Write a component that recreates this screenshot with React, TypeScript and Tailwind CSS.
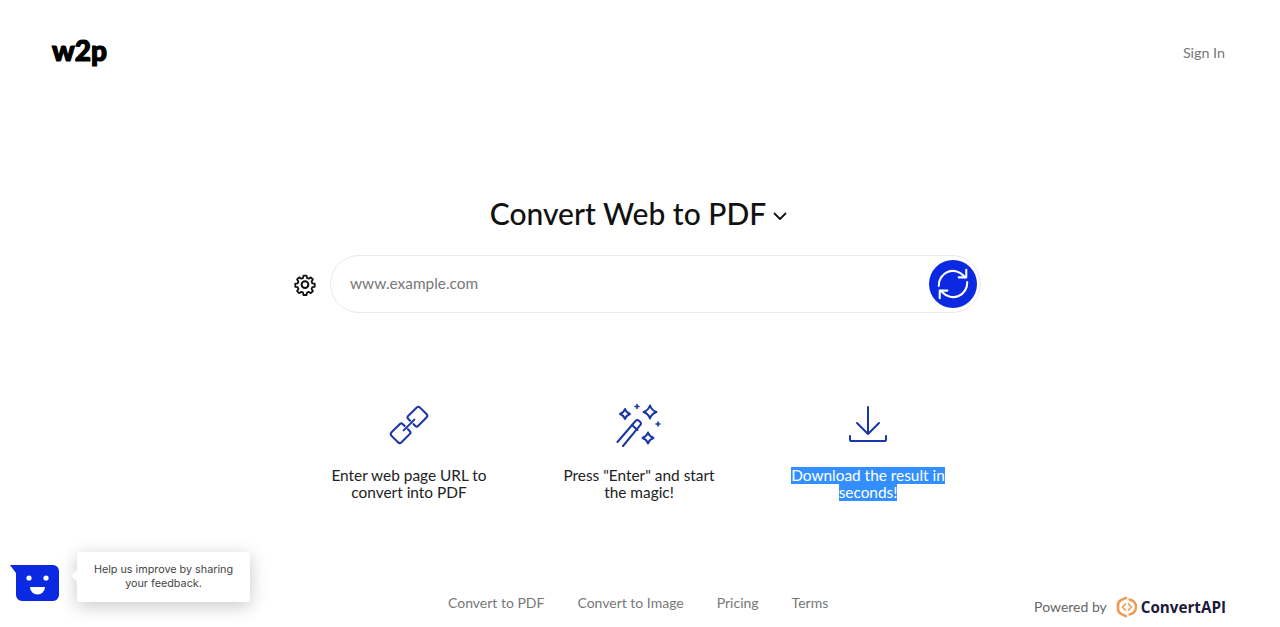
import React from "react";

const Gear = () => (
  <svg width="24" height="24" viewBox="0 0 24 24" fill="none" stroke="#111" strokeWidth="2" strokeLinecap="round" strokeLinejoin="round">
    <path d="M10.3 2.6h3.4l.5 2.7 1.900.8 2.300-1.500 2.400 2.400-1.500 2.300.8 1.900 2.700.5v3.400l-2.700.5-.8 1.900 1.500 2.300-2.400 2.400-2.300-1.500-1.900.8-.5 2.700h-3.400l-.5-2.700-1.900-.8-2.300 1.500-2.400-2.400 1.500-2.300-.8-1.900-2.700-.5v-3.400l2.700-.5.8-1.900-1.500-2.300 2.400-2.400 2.300 1.500 1.900-.8z" transform="translate(1.200 1.200) scale(.9)" />
    <circle cx="12" cy="12.600" r="3.400" />
  </svg>
);

const LinkIcon = () => (
  <svg width="41" height="41" viewBox="0 0 42 42" fill="none" stroke="#1a35a8" strokeWidth="2.100" strokeLinecap="round" strokeLinejoin="round">
    <path d="M16 21.500l-2-2a2 2 0 0 0-2.800 0L2.600 28a2.600 2.600 0 0 0 0 3.600l6.600 6.600a2.600 2.600 0 0 0 3.600 0l8.600-8.600a2 2 0 0 0 0-2.800l-2-2" />
    <path d="M25 19.500l2 2a2 2 0 0 0 2.800 0l8.600-8.600a2.600 2.600 0 0 0 0-3.600l-6.600-6.600a2.600 2.600 0 0 0-3.600 0l-8.600 8.600a2 2 0 0 0 0 2.800l2 2" />
    <path d="M15 26l11-11" />
  </svg>
);

const Star = ({ x, y, r }: { x: number; y: number; r: number }) => (
  <path d={`M${x} ${y - r}Q${x + r * 0.25} ${y - r * 0.25} ${x + r} ${y}Q${x + r * 0.25} ${y + r * 0.25} ${x} ${y + r}Q${x - r * 0.25} ${y + r * 0.25} ${x - r} ${y}Q${x - r * 0.25} ${y - r * 0.25} ${x} ${y - r}Z`} />
);

const Wand = () => (
  <svg width="46" height="44" viewBox="0 0 46 44" fill="none" stroke="#1a35a8" strokeWidth="2" strokeLinejoin="round" strokeLinecap="round">
    <Star x={9} y={11} r={5} />
    <Star x={34} y={9} r={6.500} />
    <Star x={32} y={35} r={5.500} />
    <path d="M21 1.500v4M19 3.500h4M42 19v4M40 21h4" strokeWidth="1.600" />
    <path d="M1.500 39l18-21a2.500 2.500 0 0 1 3.500-.2l1 .9a2.500 2.500 0 0 1 .2 3.500L7 43" />
    <path d="M16 22l5.500 5" />
  </svg>
);

const Download = () => (
  <svg width="40" height="40" viewBox="0 0 40 40" fill="none" stroke="#1a35a8" strokeWidth="2" strokeLinecap="round" strokeLinejoin="round">
    <path d="M20 2v27M9 18l11 11 11-11" />
    <path d="M2 31v4a1 1 0 0 0 1 1h34a1 1 0 0 0 1-1v-4" />
  </svg>
);

const ConvertLogo = () => (
  <svg width="22" height="22" viewBox="0 0 22 22" fill="none" stroke="#ef9a52" strokeLinecap="round" strokeLinejoin="round">
    <path d="M10 1.800L5 4.200Q2 5.800 2 9v4q0 3.200 3 4.800l5 2.400" strokeWidth="2.600" />
    <path d="M13.500 3.500c3.800 1 6.500 3.800 6.500 7.500s-2.700 6.500-6.500 7.500" strokeWidth="2.400" />
    <path d="M9.500 8l-3 3 3 3M12.500 8l3 3-3 3" strokeWidth="1.700" />
  </svg>
);

export default function App() {
  return (
    <div className="relative flex h-[627px] w-[1280px] flex-col overflow-hidden bg-white font-['Lato','Noto_Sans',sans-serif] text-[#212121]">
      <header className="flex items-start justify-between pl-[52px] pr-[55px] pt-[32px]">
        <span className="font-['Lato',sans-serif] text-[28px] font-black leading-[36px] tracking-[0.1px] text-black [-webkit-text-stroke:1.200px_black]">w2p</span>
        <a className="pt-[12px] text-[14.300px] leading-[18px] text-[#777]">Sign In</a>
      </header>

      <main className="flex flex-col items-center">
        <h1 className="ml-[-3px] mt-[125px] flex h-[40px] items-center text-[30px] font-medium leading-[40px] text-[#111]">
          <span>Convert Web to PDF</span>
          <svg className="ml-[7px] mt-[6px]" width="14" height="9" viewBox="0 0 14 9" fill="none" stroke="#111" strokeWidth="1.800" strokeLinecap="round" strokeLinejoin="round">
            <path d="M1.500 1.500L7 7l5.500-5.500" />
          </svg>
        </h1>

        <div className="ml-[-6px] mt-[22px] flex items-center gap-[13px]">
          <Gear />
          <div className="flex h-[58px] w-[651px] items-center justify-between rounded-full border border-[#e8e8ee] pl-[19px] pr-[3px]">
            <span className="text-[15.400px] text-[#777]">www.example.com</span>
            <button className="flex h-[48px] w-[48px] items-center justify-center rounded-full bg-[#0b29e0]">
              <svg width="36" height="36" viewBox="0 0 38 38" fill="none" stroke="#fff" strokeWidth="2.200" strokeLinecap="round" strokeLinejoin="round">
                <path d="M4 21a15 15 0 0 1 26-11l2 2" />
                <path d="M33 4v8h-8" />
                <path d="M34 17a15 15 0 0 1-26 11l-2-2" />
                <path d="M5 34v-8h8" />
              </svg>
            </button>
          </div>
        </div>

        <section className="ml-[-2px] mt-[89px] grid w-[690px] grid-cols-3 text-center text-[15.400px] leading-[17px] text-[#222]">
          <div className="flex flex-col items-center">
            <div className="flex h-[46px] items-center"><LinkIcon /></div>
            <p className="mt-[19px] whitespace-nowrap">Enter web page URL to<br />convert into PDF</p>
          </div>
          <div className="flex flex-col items-center">
            <div className="flex h-[46px] items-center"><Wand /></div>
            <p className="mt-[19px] whitespace-nowrap">Press "Enter" and start<br />the magic!</p>
          </div>
          <div className="flex flex-col items-center">
            <div className="ml-[-2px] flex h-[46px] items-center"><Download /></div>
            <p className="ml-[-2px] mt-[19px] flex flex-col items-center whitespace-nowrap text-white">
              <span className="bg-[#338fff]">Download the result in</span>
              <span className="bg-[#338fff]">seconds!</span>
            </p>
          </div>
        </section>
      </main>

      <footer className="mt-auto flex items-start pb-[9px] pr-[54px]">
        <nav className="ml-[448px] flex gap-[33px] text-[14px] leading-[18px] text-[#777]">
          <a>Convert to PDF</a>
          <a>Convert to Image</a>
          <a>Pricing</a>
          <a>Terms</a>
        </nav>
        <div className="ml-auto mt-[2px] flex items-center text-[14px] leading-[18px] text-[#666]">
          <span>Powered by</span>
          <span className="ml-[9px]"><ConvertLogo /></span>
          <span className="ml-[3px] font-['Open_Sans',sans-serif] text-[15.200px] font-bold text-[#1c1a3a]">ConvertAPI</span>
        </div>
      </footer>

      <div className="absolute left-[10px] top-[552px] flex items-start">
        <div className="relative mt-[13px] h-[35px] w-[49px]">
          <svg className="absolute left-0 top-0" width="49" height="36" viewBox="0 0 49 36" fill="#0b29e0">
            <path d="M0 0h43a6 6 0 0 1 6 6v24a6 6 0 0 1-6 6H12a6 6 0 0 1-6-6V8z" />
            <circle cx="19" cy="13" r="2.600" fill="#fff" />
            <circle cx="36" cy="13" r="2.600" fill="#fff" />
            <path d="M20 22h15a7.500 7.500 0 0 1-15 0z" fill="#fff" />
          </svg>
        </div>
        <div className="relative ml-[18px] w-[173px] rounded-[3px] bg-white px-[10px] py-[11px] text-center font-['Inter','Liberation_Sans',sans-serif] text-[10.800px] leading-[14px] text-[#444] shadow-[0_4px_18px_rgba(0,0,0,0.22)]">
          Help us improve by sharing your feedback.
          <span className="absolute left-[-4px] top-[19px] h-[9px] w-[9px] rotate-45 bg-white" />
        </div>
      </div>
    </div>
  );
}
